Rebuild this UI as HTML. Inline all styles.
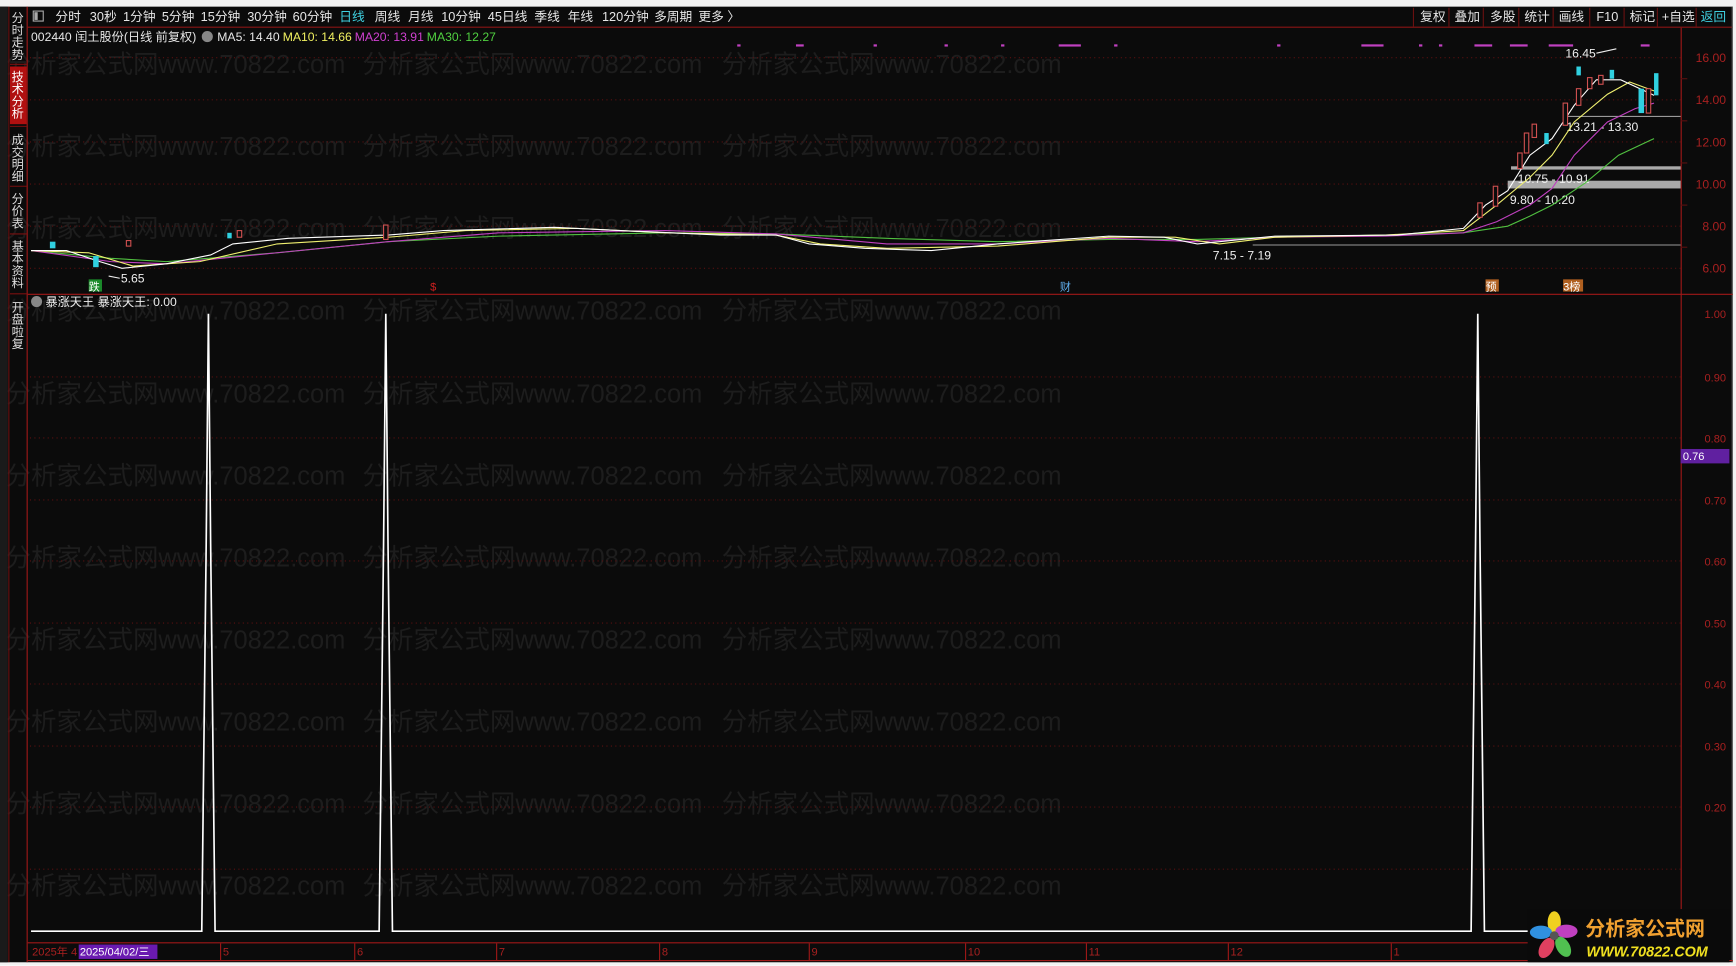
<!DOCTYPE html>
<html><head><meta charset="utf-8"><style>
html,body{margin:0;padding:0;background:#fff;width:1736px;height:966px;overflow:hidden}
svg{display:block}
text{font-family:"Liberation Sans","Noto Sans CJK SC",sans-serif}
</style></head><body>
<svg width="1736" height="966" viewBox="0 0 1736 966" xmlns="http://www.w3.org/2000/svg">
<g transform="scale(1.1086)">
<rect x="0" y="0" width="1566" height="871" fill="#f2f2f2"/>
<rect x="0" y="6" width="1563" height="862" fill="#0b0b0b"/>
<!-- watermark -->
<g fill="#1d1d1d" font-size="23">
<text x="5" y="66">分析家公式网www.70822.com</text><text x="327" y="66">分析家公式网www.70822.com</text><text x="651" y="66">分析家公式网www.70822.com</text>
<text x="5" y="140">分析家公式网www.70822.com</text><text x="327" y="140">分析家公式网www.70822.com</text><text x="651" y="140">分析家公式网www.70822.com</text>
<text x="5" y="214">分析家公式网www.70822.com</text><text x="327" y="214">分析家公式网www.70822.com</text><text x="651" y="214">分析家公式网www.70822.com</text>
<text x="5" y="288">分析家公式网www.70822.com</text><text x="327" y="288">分析家公式网www.70822.com</text><text x="651" y="288">分析家公式网www.70822.com</text>
<text x="5" y="363">分析家公式网www.70822.com</text><text x="327" y="363">分析家公式网www.70822.com</text><text x="651" y="363">分析家公式网www.70822.com</text>
<text x="5" y="437">分析家公式网www.70822.com</text><text x="327" y="437">分析家公式网www.70822.com</text><text x="651" y="437">分析家公式网www.70822.com</text>
<text x="5" y="511">分析家公式网www.70822.com</text><text x="327" y="511">分析家公式网www.70822.com</text><text x="651" y="511">分析家公式网www.70822.com</text>
<text x="5" y="585">分析家公式网www.70822.com</text><text x="327" y="585">分析家公式网www.70822.com</text><text x="651" y="585">分析家公式网www.70822.com</text>
<text x="5" y="659">分析家公式网www.70822.com</text><text x="327" y="659">分析家公式网www.70822.com</text><text x="651" y="659">分析家公式网www.70822.com</text>
<text x="5" y="733">分析家公式网www.70822.com</text><text x="327" y="733">分析家公式网www.70822.com</text><text x="651" y="733">分析家公式网www.70822.com</text>
<text x="5" y="807">分析家公式网www.70822.com</text><text x="327" y="807">分析家公式网www.70822.com</text><text x="651" y="807">分析家公式网www.70822.com</text>
</g>
<!-- left bar -->
<rect x="0" y="6" width="7" height="862" fill="#1a1a1a"/>
<line x1="8" y1="6" x2="8" y2="868" stroke="#6a1010"/>
<line x1="24.5" y1="6" x2="24.5" y2="868" stroke="#a01818"/>
<rect x="9" y="60" width="15" height="52" fill="#b01010"/>
<g fill="#ddd" font-size="11" text-anchor="middle">
<text x="16" y="20">分</text><text x="16" y="31">时</text><text x="16" y="42">走</text><text x="16" y="53">势</text>
<text x="16" y="73" fill="#fff">技</text><text x="16" y="84" fill="#fff">术</text><text x="16" y="95" fill="#fff">分</text><text x="16" y="106" fill="#fff">析</text>
<text x="16" y="130">成</text><text x="16" y="141">交</text><text x="16" y="152">明</text><text x="16" y="163">细</text>
<text x="16" y="183">分</text><text x="16" y="194">价</text><text x="16" y="205">表</text>
<text x="16" y="226">基</text><text x="16" y="237">本</text><text x="16" y="248">资</text><text x="16" y="259">料</text>
<text x="16" y="281">开</text><text x="16" y="292">盘</text><text x="16" y="303">啦</text><text x="16" y="314">复</text>
</g>
<g stroke="#7a1010"><line x1="9" x2="24" y1="58" y2="58"/><line x1="9" x2="24" y1="114" y2="114"/><line x1="9" x2="24" y1="168" y2="168"/><line x1="9" x2="24" y1="211" y2="211"/><line x1="9" x2="24" y1="265" y2="265"/></g>
<!-- toolbar -->
<line x1="25" y1="24.5" x2="1563" y2="24.5" stroke="#8a1515"/>
<rect x="30" y="10" width="9" height="9" fill="none" stroke="#aaa"/><rect x="31" y="11" width="3" height="7" fill="#aaa"/>
<g fill="#e6e6e6" font-size="11.5">
<text x="50" y="19">分时</text><text x="81" y="19">30秒</text><text x="111" y="19">1分钟</text><text x="146" y="19">5分钟</text><text x="181" y="19">15分钟</text><text x="223" y="19">30分钟</text><text x="264" y="19">60分钟</text><text x="306" y="19" fill="#3fd0e0">日线</text><text x="338" y="19">周线</text><text x="368" y="19">月线</text><text x="398" y="19">10分钟</text><text x="440" y="19">45日线</text><text x="482" y="19">季线</text><text x="512" y="19">年线</text><text x="543" y="19">120分钟</text><text x="590" y="19">多周期</text><text x="630" y="19">更多 〉</text>
<text x="1281" y="19">复权</text><text x="1312" y="19">叠加</text><text x="1344" y="19">多股</text><text x="1375" y="19">统计</text><text x="1406" y="19">画线</text><text x="1440" y="19">F10</text><text x="1470" y="19">标记</text><text x="1499" y="19">+自选</text><text x="1534" y="19" fill="#3fd0e0">返回</text>
</g>
<g stroke="#6a1010"><line x1="1275" y1="7" x2="1275" y2="24"/><line x1="1307" y1="7" x2="1307" y2="24"/><line x1="1338" y1="7" x2="1338" y2="24"/><line x1="1370" y1="7" x2="1370" y2="24"/><line x1="1401" y1="7" x2="1401" y2="24"/><line x1="1434" y1="7" x2="1434" y2="24"/><line x1="1465" y1="7" x2="1465" y2="24"/><line x1="1495" y1="7" x2="1495" y2="24"/><line x1="1530" y1="7" x2="1530" y2="24"/></g>
<!-- info line -->
<g font-size="11">
<text x="28" y="37" fill="#e6e6e6">002440 闰土股份(日线 前复权)</text>
<circle cx="187" cy="33" r="5" fill="#888"/>
<text x="196" y="37" fill="#e6e6e6">MA5: 14.40</text>
<text x="255" y="37" fill="#f0f060">MA10: 14.66</text>
<text x="320" y="37" fill="#d040d0">MA20: 13.91</text>
<text x="385" y="37" fill="#50d040">MA30: 12.27</text>
</g>
<!-- price axis -->
<line x1="1516.5" y1="25" x2="1516.5" y2="850" stroke="#a01818"/>
<line x1="1562.5" y1="6" x2="1562.5" y2="868" stroke="#555"/>
<g stroke="#5a1010" stroke-dasharray="1,3">
<line x1="27" x2="1516" y1="52" y2="52"/><line x1="27" x2="1516" y1="90" y2="90"/><line x1="27" x2="1516" y1="128" y2="128"/><line x1="27" x2="1516" y1="166" y2="166"/><line x1="27" x2="1516" y1="204" y2="204"/><line x1="27" x2="1516" y1="242" y2="242"/>
</g>
<g fill="#a82020" font-size="11" text-anchor="end">
<text x="1557" y="56">16.00</text><text x="1557" y="94">14.00</text><text x="1557" y="132">12.00</text><text x="1557" y="170">10.00</text><text x="1557" y="208">8.00</text><text x="1557" y="246">6.00</text>
</g>
<g stroke="#5a1010"><line x1="1516" x2="1522" y1="71" y2="71"/><line x1="1516" x2="1522" y1="109" y2="109"/><line x1="1516" x2="1522" y1="147" y2="147"/><line x1="1516" x2="1522" y1="185" y2="185"/><line x1="1516" x2="1522" y1="223" y2="223"/></g>
<!-- support zones -->
<line x1="1130" y1="221" x2="1516" y2="221" stroke="#999"/>
<line x1="1410" y1="105" x2="1516" y2="105" stroke="#999"/>
<rect x="1363" y="150" width="153" height="3" fill="#aaa"/>
<rect x="1360" y="163" width="156" height="7" fill="#aaa"/>
<g fill="#eee" font-size="11">
<text x="1094" y="234">7.15 - 7.19</text><text x="1413" y="118">13.21 - 13.30</text><text x="1369" y="165">10.75 - 10.91</text><text x="1362" y="184">9.80 - 10.20</text><text x="1412" y="52">16.45</text><text x="109" y="255">5.65</text>
</g>
<path d="M1440 48 L1458 44" stroke="#eee"/><path d="M98 249 L108 251" stroke="#eee"/>
<!-- MA lines -->
<polyline fill="none" stroke="#50c040" points="28,226 100,233 150,236 250,228 350,218 450,213 600,210 700,211 800,215 900,218 1000,216 1080,216 1150,214 1250,212 1320,210 1360,204 1380,195 1400,185 1430,165 1460,140 1492,125"/>
<polyline fill="none" stroke="#c040c0" points="28,226 100,236 150,238 250,228 350,218 450,210 600,208 700,211 800,220 900,220 1000,215 1080,218 1150,214 1250,213 1320,210 1350,200 1380,185 1400,170 1420,140 1450,110 1475,98 1492,93"/>
<polyline fill="none" stroke="#f0f070" points="28,226 80,228 120,240 180,236 250,220 350,214 420,208 520,206 600,210 700,212 740,220 800,224 900,222 1000,214 1060,214 1100,220 1150,214 1250,212 1320,208 1350,185 1380,160 1400,140 1420,110 1450,85 1470,74 1492,82"/>
<polyline fill="none" stroke="#ffffff" points="28,226 60,226 90,236 110,242 150,238 190,230 210,220 260,215 350,212 400,208 500,205 560,208 650,212 700,212 730,220 780,224 840,226 900,220 1000,213 1050,214 1080,220 1120,216 1150,213 1260,212 1320,206 1340,185 1360,172 1380,140 1400,125 1420,95 1440,72 1462,72 1475,78 1492,86"/>
<!-- candles scattered -->
<g fill="#0b0b0b" stroke="#d05050">
<rect x="114" y="217" width="4" height="5"/><rect x="214" y="208" width="4" height="6"/><rect x="346" y="203" width="4" height="13"/><rect x="1333" y="183" width="4" height="13"/><rect x="1347" y="168" width="4" height="18"/><rect x="1369" y="138" width="4" height="14"/><rect x="1375" y="120" width="4" height="18"/><rect x="1382" y="112" width="4" height="12"/><rect x="1410" y="93" width="4" height="20"/><rect x="1422" y="80" width="4" height="15"/><rect x="1432" y="70" width="4" height="10"/><rect x="1442" y="68" width="4" height="8"/><rect x="1485" y="80" width="4" height="22"/>
</g>
<g fill="#30d0e0">
<rect x="45" y="218" width="5" height="6"/><rect x="84" y="231" width="5" height="10"/><rect x="205" y="210" width="4" height="5"/><rect x="1393" y="120" width="4" height="10"/><rect x="1422" y="60" width="4" height="8"/><rect x="1452" y="63" width="4" height="8"/><rect x="1478" y="80" width="5" height="22"/><rect x="1492" y="66" width="4" height="20"/>
</g>
<g fill="#c040c0"><rect x="665" y="40" width="3" height="2"/><rect x="718" y="40" width="7" height="2"/><rect x="788" y="40" width="3" height="2"/><rect x="852" y="40" width="3" height="2"/><rect x="903" y="40" width="3" height="2"/><rect x="955" y="40" width="20" height="2"/><rect x="1005" y="40" width="3" height="2"/><rect x="1152" y="40" width="3" height="2"/><rect x="1228" y="40" width="20" height="2"/><rect x="1280" y="40" width="3" height="2"/><rect x="1298" y="40" width="3" height="2"/><rect x="1330" y="40" width="16" height="2"/><rect x="1362" y="40" width="16" height="2"/><rect x="1397" y="40" width="22" height="2"/><rect x="1480" y="40" width="8" height="2"/></g>
<rect x="80" y="252" width="12" height="11" fill="#1a8a2a"/><text x="80" y="262" font-size="10" fill="#fff">跌</text>
<text x="388" y="262" font-size="10" fill="#d02020">$</text>
<text x="956" y="262" font-size="10" fill="#60b0f0">财</text>
<rect x="1340" y="252" width="12" height="11" fill="#b06020"/><text x="1340" y="262" font-size="10" fill="#fff">预</text>
<rect x="1410" y="252" width="18" height="11" fill="#b06020"/><text x="1410" y="262" font-size="10" fill="#fff">3榜</text>
<!-- separator -->
<line x1="25" y1="265.5" x2="1563" y2="265.5" stroke="#a01818"/>
<!-- indicator -->
<circle cx="33" cy="272" r="5" fill="#888"/>
<text x="41" y="276" font-size="11" fill="#eee">暴涨天王  暴涨天王: 0.00</text>
<g stroke="#5a1010" stroke-dasharray="1,3">
<line x1="27" x2="1516" y1="340" y2="340"/><line x1="27" x2="1516" y1="395" y2="395"/><line x1="27" x2="1516" y1="451" y2="451"/><line x1="27" x2="1516" y1="506" y2="506"/><line x1="27" x2="1516" y1="562" y2="562"/><line x1="27" x2="1516" y1="617" y2="617"/><line x1="27" x2="1516" y1="673" y2="673"/><line x1="27" x2="1516" y1="728" y2="728"/><line x1="27" x2="1516" y1="784" y2="784"/>
</g>
<g fill="#a82020" font-size="10" text-anchor="end">
<text x="1557" y="287">1.00</text><text x="1557" y="344">0.90</text><text x="1557" y="399">0.80</text><text x="1557" y="455">0.70</text><text x="1557" y="510">0.60</text><text x="1557" y="566">0.50</text><text x="1557" y="621">0.40</text><text x="1557" y="677">0.30</text><text x="1557" y="732">0.20</text>
</g>
<rect x="1516" y="405" width="44" height="13" fill="#6020a0"/><text x="1518" y="415" font-size="10" fill="#fff">0.76</text>
<polyline fill="none" stroke="#fff" stroke-width="1.5" points="28,840 182,840 186,490 188,283 190,490 194,840 342,840 346,490 348,283 350,490 354,840 1327,840 1331,490 1333,283 1335,490 1339,840 1380,840"/>
<!-- date axis -->
<line x1="25" y1="850.5" x2="1516" y2="850.5" stroke="#a01818"/>
<line x1="25" y1="866.5" x2="1563" y2="866.5" stroke="#a01818"/>
<g fill="#a82020" font-size="10">
<text x="29" y="862">2025年 4</text><text x="201" y="862">5</text><text x="322" y="862">6</text><text x="450" y="862">7</text><text x="597" y="862">8</text><text x="732" y="862">9</text><text x="873" y="862">10</text><text x="982" y="862">11</text><text x="1110" y="862">12</text><text x="1257" y="862">1</text>
</g>
<g stroke="#a01818"><line x1="199" y1="851" x2="199" y2="866"/><line x1="320" y1="851" x2="320" y2="866"/><line x1="448" y1="851" x2="448" y2="866"/><line x1="595" y1="851" x2="595" y2="866"/><line x1="730" y1="851" x2="730" y2="866"/><line x1="871" y1="851" x2="871" y2="866"/><line x1="980" y1="851" x2="980" y2="866"/><line x1="1108" y1="851" x2="1108" y2="866"/><line x1="1255" y1="851" x2="1255" y2="866"/></g>
<rect x="71" y="852" width="71" height="13" fill="#6a1ab0"/><text x="72" y="862" font-size="10" fill="#fff">2025/04/02/三</text>
<!-- logo -->
<rect x="1378" y="820" width="182" height="48" fill="#0a0a0a"/>
<g transform="translate(1402,844)">
<ellipse cx="0" cy="-12" rx="6" ry="10" fill="#f0d020"/>
<ellipse cx="11" cy="-4" rx="10" ry="6" fill="#c040c0"/>
<ellipse cx="8" cy="10" rx="6" ry="10" fill="#50c050" transform="rotate(-30 8 10)"/>
<ellipse cx="-7" cy="11" rx="6" ry="10" fill="#e04060" transform="rotate(30 -7 11)"/>
<ellipse cx="-12" cy="-3" rx="10" ry="6" fill="#3090e0"/>
<circle r="4" fill="#555"/>
</g>
<text x="1430" y="844" font-size="18" font-weight="bold" fill="#f0a030">分析家公式网</text>
<text x="1431" y="863" font-size="13" font-weight="bold" font-style="italic" fill="#f0e020">WWW.70822.COM</text>
</g>
</svg>
</body></html>
